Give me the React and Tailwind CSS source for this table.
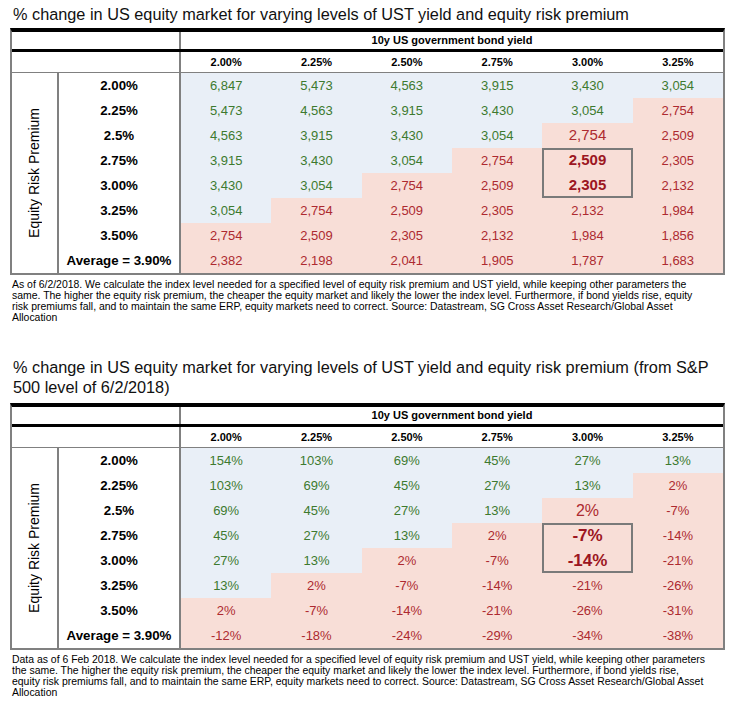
import React from "react";

const COLS = ["col-start-1", "col-start-2", "col-start-3", "col-start-4", "col-start-5", "col-start-6"];
const ROWS = ["row-start-1", "row-start-2", "row-start-3", "row-start-4", "row-start-5", "row-start-6", "row-start-7", "row-start-8"];

const yields = ["2.00%", "2.25%", "2.50%", "2.75%", "3.00%", "3.25%"];
const erps = ["2.00%", "2.25%", "2.5%", "2.75%", "3.00%", "3.25%", "3.50%", "Average = 3.90%"];

const t1 = [
  ["6,847", "5,473", "4,563", "3,915", "3,430", "3,054"],
  ["5,473", "4,563", "3,915", "3,430", "3,054", "2,754"],
  ["4,563", "3,915", "3,430", "3,054", "2,754", "2,509"],
  ["3,915", "3,430", "3,054", "2,754", "2,509", "2,305"],
  ["3,430", "3,054", "2,754", "2,509", "2,305", "2,132"],
  ["3,054", "2,754", "2,509", "2,305", "2,132", "1,984"],
  ["2,754", "2,509", "2,305", "2,132", "1,984", "1,856"],
  ["2,382", "2,198", "2,041", "1,905", "1,787", "1,683"],
];

const t2 = [
  ["154%", "103%", "69%", "45%", "27%", "13%"],
  ["103%", "69%", "45%", "27%", "13%", "2%"],
  ["69%", "45%", "27%", "13%", "2%", "-7%"],
  ["45%", "27%", "13%", "2%", "-7%", "-14%"],
  ["27%", "13%", "2%", "-7%", "-14%", "-21%"],
  ["13%", "2%", "-7%", "-14%", "-21%", "-26%"],
  ["2%", "-7%", "-14%", "-21%", "-26%", "-31%"],
  ["-12%", "-18%", "-24%", "-29%", "-34%", "-38%"],
];

function Table({ data, second }) {
  return (
    <div className="ml-[10px] w-[715px] border-t-[4px] border-t-black border-x-2 border-b-2 border-x-[#808080] border-b-[#808080] bg-white">
      <div className="flex h-[20px] border-b-[3px] border-black">
        <div className="w-[169px] border-r-2 border-[#808080]" />
        <div className="flex-1 flex items-center justify-center text-[11px] font-bold text-black">
          10y US government bond yield
        </div>
      </div>
      <div className="flex h-[21px] border-b border-[#808080]">
        <div className="w-[169px] border-r-2 border-[#808080]" />
        <div className="flex-1 grid grid-cols-6">
          {yields.map((y) => (
            <div key={y} className="flex items-center justify-center text-[11px] font-bold text-black">
              {y}
            </div>
          ))}
        </div>
      </div>
      <div className="flex h-[200px]">
        <div className="w-[47px] border-r-2 border-[#808080] flex items-center justify-center">
          <span className="[writing-mode:vertical-rl] rotate-180 text-[14px] text-black whitespace-nowrap">
            Equity Risk Premium
          </span>
        </div>
        <div className="w-[122px] border-r-2 border-[#808080] flex flex-col">
          {erps.map((e) => (
            <div key={e} className="h-[25px] flex items-center justify-center text-[13.3px] font-bold text-black whitespace-nowrap">
              {e}
            </div>
          ))}
        </div>
        <div className="flex-1 grid grid-cols-6 grid-rows-8">
          {data.map((row, i) =>
            row.map((v, j) => {
              const blue = i + j < 6;
              const bold = j === 4 && (i === 3 || i === 4);
              const big = j === 4 && i === 2;
              let cls = "flex items-center justify-center ";
              cls += blue ? "bg-[#e9eff7] text-[#3d7a2f] " : "bg-[#f8ded7] text-[#ad2a30] ";
              if (bold) {
                cls += second ? "text-[17px] font-bold !text-[#9c1622] " : "text-[15px] font-bold !text-[#9c1622] ";
              } else if (big) {
                cls += second ? "text-[16px] " : "text-[15px] ";
              } else {
                cls += "text-[13px] ";
              }
              return (
                <div key={i + "-" + j} className={cls + COLS[j] + " " + ROWS[i]}>
                  {v}
                </div>
              );
            })
          )}
          <div className="col-start-5 row-start-4 row-span-2 border-2 border-[#7a7a7a]" />
        </div>
      </div>
    </div>
  );
}

function Note({ lines }) {
  return (
    <div className="mt-[4px] pl-[12px] text-[10.45px] leading-[11px] text-black">
      {lines.map((l) => (
        <div key={l} className="whitespace-nowrap">
          {l}
        </div>
      ))}
    </div>
  );
}

export default function App() {
  return (
    <div className="w-[748px] h-[718px] bg-white overflow-hidden font-['Liberation_Sans',Arial,sans-serif] text-black">
      <div className="pt-[4px] pl-[13px] text-[16.3px] leading-[20px] text-[#111] whitespace-nowrap">
        % change in US equity market for varying levels of UST yield and equity risk premium
      </div>
      <div className="mt-[4px]">
        <Table data={t1} />
      </div>
      <Note
        lines={[
          "As of 6/2/2018. We calculate the index level needed for a specified level of equity risk premium and UST yield, while keeping other parameters the",
          "same. The higher the equity risk premium, the cheaper the equity market and likely the lower the index level. Furthermore, if bond yields rise, equity",
          "risk premiums fall, and to maintain the same ERP, equity markets need to correct. Source: Datastream, SG Cross Asset Research/Global Asset",
          "Allocation",
        ]}
      />
      <div className="mt-[34px] pl-[13px] text-[16.3px] leading-[20px] text-[#111] whitespace-nowrap">
        % change in US equity market for varying levels of UST yield and equity risk premium (from S&amp;P
        <br />
        500 level of 6/2/2018)
      </div>
      <div className="mt-[6px]">
        <Table data={t2} second />
      </div>
      <Note
        lines={[
          "Data as of 6 Feb 2018. We calculate the index level needed for a specified level of equity risk premium and UST yield, while keeping other parameters",
          "the same. The higher the equity risk premium, the cheaper the equity market and likely the lower the index level. Furthermore, if bond yields rise,",
          "equity risk premiums fall, and to maintain the same ERP, equity markets need to correct. Source: Datastream, SG Cross Asset Research/Global Asset",
          "Allocation",
        ]}
      />
    </div>
  );
}
